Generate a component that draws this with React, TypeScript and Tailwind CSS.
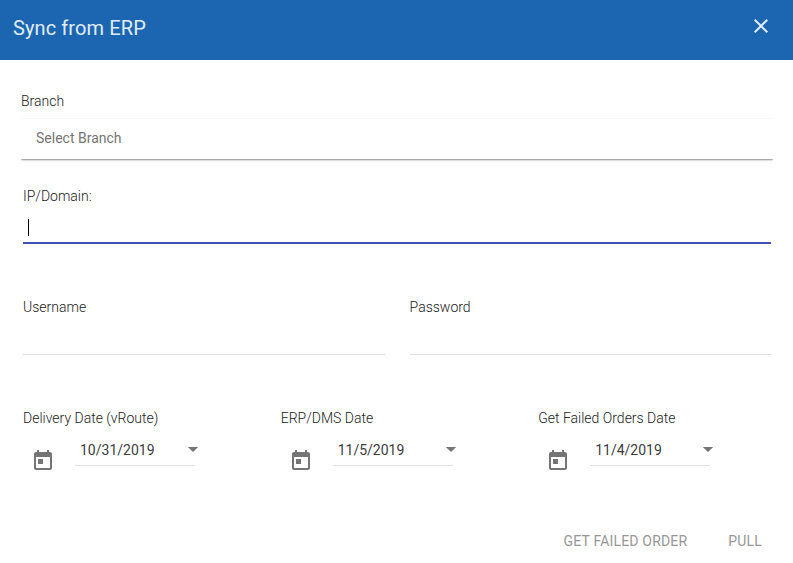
import React from "react";

function TodayIcon() {
  return (
    <svg className="ml-2 mt-[21px] size-6 shrink-0 fill-[#757575]" viewBox="0 0 24 24">
      <path d="M19 3h-1V1h-2v2H8V1H6v2H5c-1.11 0-1.99.9-1.99 2L3 19c0 1.1.89 2 2 2h14c1.1 0 2-.9 2-2V5c0-1.1-.9-2-2-2zm0 16H5V8h14v11zM7 10h5v5H7z" />
    </svg>
  );
}

function DateField({ label, value, className }: { label: string; value: string; className: string }) {
  return (
    <div className={className}>
      <label className="block h-5 whitespace-nowrap leading-5">{label}</label>
      <div className="flex">
        <TodayIcon />
        <div className="ml-5 mt-2 flex h-[30px] w-[120px] border-b border-[#e0e0e0]">
          <span className="ml-[5px] w-[107px] shrink-0 pt-[4px] font-normal leading-5 text-[#212121]/90">{value}</span>
          <svg className="mt-[11px] h-[5px] w-3 shrink-0 fill-[#757575]" viewBox="0 0 12 5">
            <path d="M.8 0h10.4L6 5z" />
          </svg>
        </div>
      </div>
    </div>
  );
}

export default function App() {
  return (
    <div className="flex h-[563px] w-[793px] flex-col overflow-hidden bg-white font-[Roboto,sans-serif] text-sm font-light text-[#212121]">
      <header className="flex h-[60px] shrink-0 items-start justify-between bg-[#1c66b1] pl-[13px] pr-5 text-[#e0ecf8]">
        <h1 className="pt-[14px] text-xl font-normal leading-7 tracking-[0.1px]">Sync from ERP</h1>
        <button className="mt-[14px]" aria-label="Close">
          <svg className="size-6 fill-[#e0ecf8]" viewBox="0 0 24 24">
            <path d="M19 6.41 17.59 5 12 10.59 6.41 5 5 6.41 10.59 12 5 17.59 6.41 19 12 13.41 17.59 19 19 17.59 13.41 12z" />
          </svg>
        </button>
      </header>

      <main className="pl-[21px] pr-5 pt-[31px]">
        <label className="block h-7 leading-5">Branch</label>
        <div className="h-10 bg-white pl-[15px] pt-[9px] font-normal leading-5 text-[#757575] shadow-[0_1px_3px_rgba(0,0,0,0.2),0_1px_1px_rgba(0,0,0,0.14),0_2px_1px_-1px_rgba(0,0,0,0.12)] [clip-path:inset(-1px_0_-5px_0)]">
          Select Branch
        </div>

        <div className="px-[2px] pt-[27px]">
          <label className="block h-5 leading-5">IP/Domain:</label>
          <div className="h-[38px] border-b-2 border-[#3f51b5] pl-[5px] pt-[13px]">
            <div className="h-[17px] w-px bg-black" />
          </div>

          <div className="mt-[53px] flex justify-between">
            <div className="h-[58px] w-[362px] border-b border-[#e0e0e0]">
              <label className="leading-5">Username</label>
            </div>
            <div className="h-[58px] w-[361.4px] border-b border-[#e0e0e0]">
              <label className="leading-5">Password</label>
            </div>
          </div>

          <div className="mt-[53px] flex">
            <DateField className="w-[257.7px]" label="Delivery Date (vRoute)" value="10/31/2019" />
            <DateField className="w-[257.5px]" label="ERP/DMS Date" value="11/5/2019" />
            <DateField className="w-[210px]" label="Get Failed Orders Date" value="11/4/2019" />
          </div>
        </div>
      </main>

      <footer className="mt-[58px] flex justify-end gap-[41px] pr-[31px] font-normal leading-5 tracking-[0.18px] text-[#979797]">
        <button>GET FAILED ORDER</button>
        <button>PULL</button>
      </footer>
    </div>
  );
}
